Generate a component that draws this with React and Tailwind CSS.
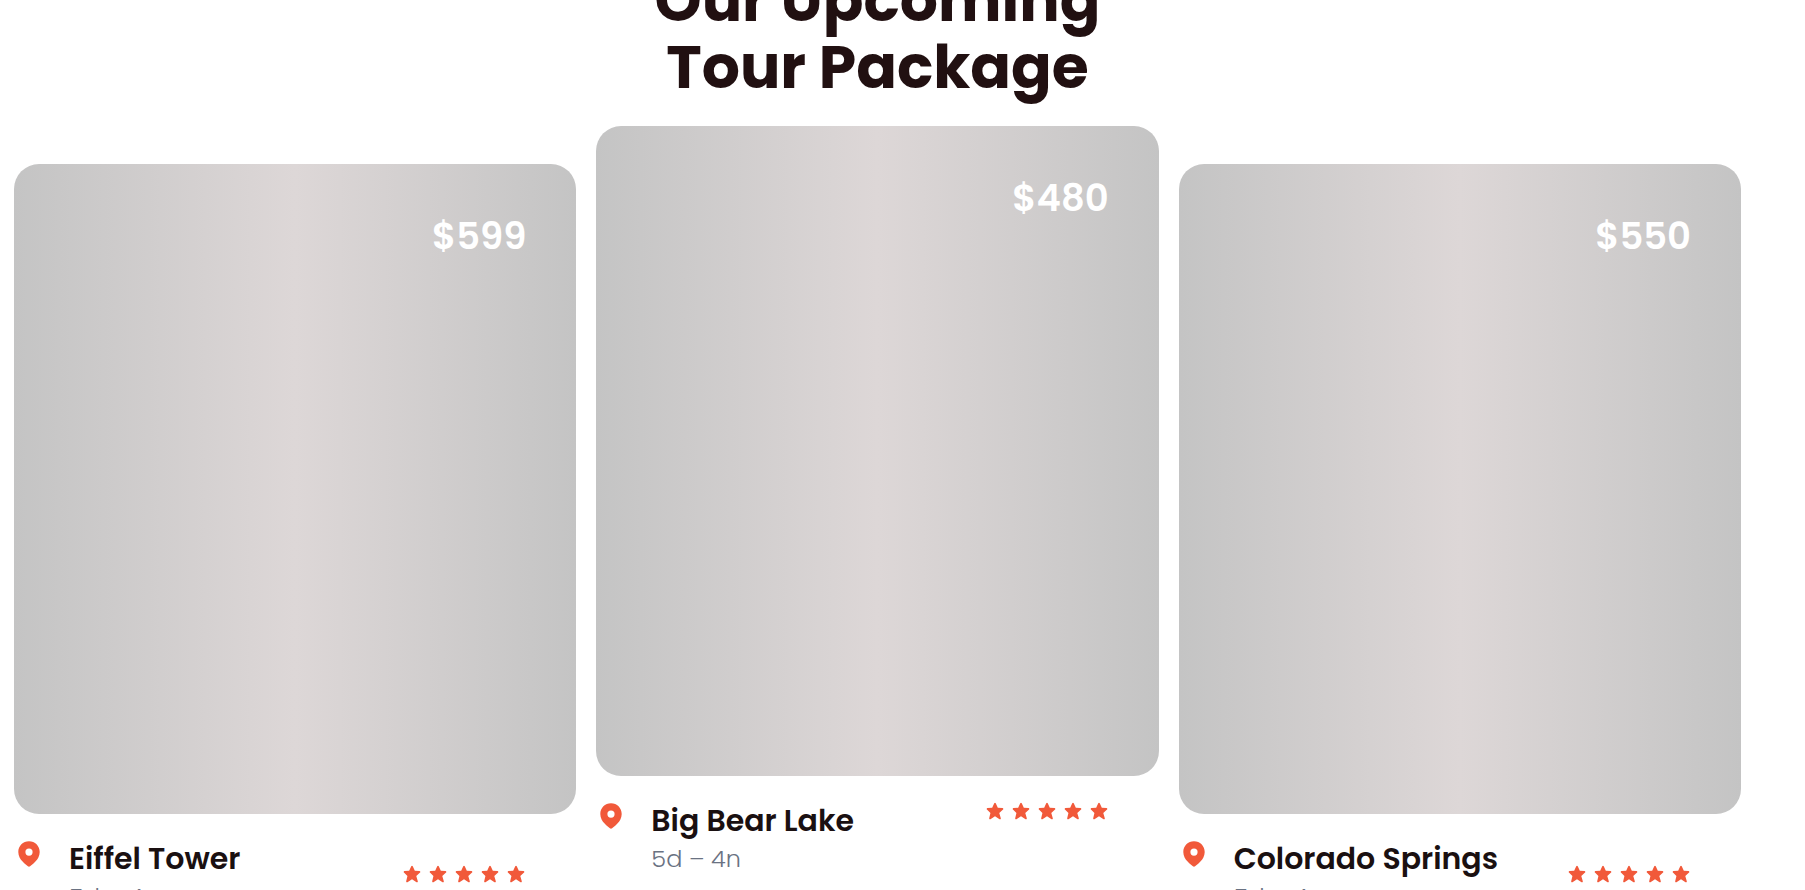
import { BiSolidStar } from "react-icons/bi";

const tours = [
  { name: "Eiffel Tower", price: "$599", length: "5d – 4n", place: "mt-[38px]", stars: "mt-[50px]" },
  { name: "Big Bear Lake", price: "$480", length: "5d – 4n", place: "", stars: "mt-[25px]" },
  { name: "Colorado Springs", price: "$550", length: "5d – 4n", place: "mt-[38px]", stars: "mt-[50px]" },
];

function Pin() {
  return (
    <svg viewBox="0 0 22 26" className="h-[26px] w-[22px] shrink-0" fill="#f1593a" fillRule="evenodd" aria-hidden="true">
      <path d="M11 .3C5 .3.3 5 .3 11c0 4 2 7.200 4.300 9.600 2.200 2.400 4.400 4 5.300 4.700.7.500 1.500.5 2.200 0 .9-.7 3.100-2.300 5.300-4.700C19.700 18.200 21.700 15 21.700 11 21.700 5 17 .3 11 .3Zm0 7.200a3.600 3.600 0 1 1 0 7.200 3.600 3.600 0 0 1 0-7.200Z" />
    </svg>
  );
}

function TourCard({ tour }) {
  return (
    <article className={`min-w-0 flex-1 ${tour.place}`}>
      <div className="flex h-[650px] justify-end rounded-[25px] bg-linear-to-r/srgb from-[#c4c4c4] via-[#ddd7d7] to-[#c4c4c4] px-[50px] pt-12">
        <p className="text-[37px] leading-12 font-semibold text-white">{tour.price}</p>
      </div>
      <div className="flex items-start pr-[50px] pl-1">
        <div className="mt-[27px]">
          <Pin />
        </div>
        <div className="mt-[25px] ml-[29px]">
          <h3 className="text-[30px] leading-10 font-semibold text-[#1a1011]">{tour.name}</h3>
          <p className="text-2xl leading-9 font-light text-gray-500">{tour.length}</p>
        </div>
        <div className={`ml-auto flex gap-[6px] text-[#f1593a] ${tour.stars}`} role="img" aria-label="5 out of 5 stars">
          {[1, 2, 3, 4, 5].map((n) => (
            <BiSolidStar key={n} className="size-5" />
          ))}
        </div>
      </div>
    </article>
  );
}

export default function App() {
  return (
    <main className="h-screen overflow-hidden bg-white font-['Poppins','Inter',sans-serif]">
      <section className="-mt-[33px] pr-16 pl-[14px]">
        <h2 className="text-center text-[60px] leading-[67px] font-bold text-[#211011]">
          Our Upcoming
          <br />
          Tour Package
        </h2>
        <div className="mt-[25px] flex items-start gap-5">
          {tours.map((tour) => (
            <TourCard key={tour.name} tour={tour} />
          ))}
        </div>
      </section>
    </main>
  );
}
